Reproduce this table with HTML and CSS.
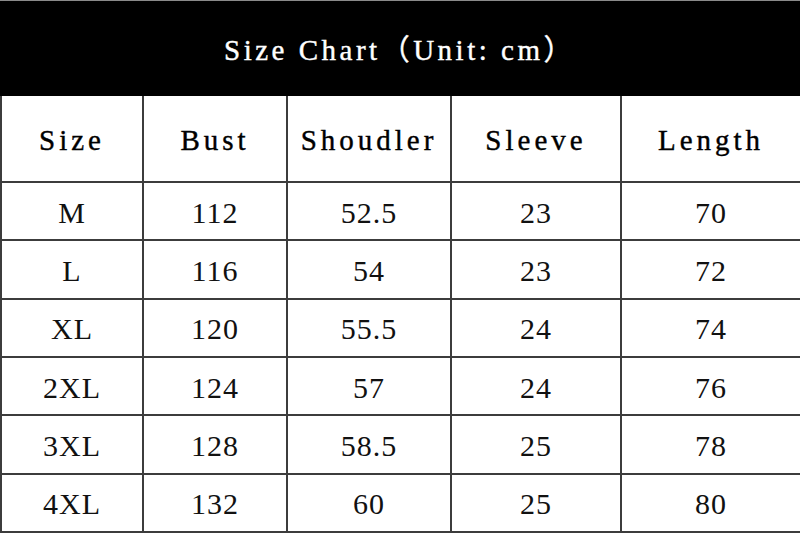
FILE: index.html
```html
<!DOCTYPE html>
<html>
<head>
<meta charset="utf-8">
<link rel="stylesheet" href="styles.css">
</head>
<body>
<div class="chart">
  <div class="title">Size Chart（Unit: cm）</div>
  <div class="grid">
    <div class="cell head first">Size</div>
    <div class="cell head">Bust</div>
    <div class="cell head">Shoudler</div>
    <div class="cell head">Sleeve</div>
    <div class="cell head last">Length</div>

    <div class="cell first">M</div><div class="cell">112</div><div class="cell">52.5</div><div class="cell">23</div><div class="cell last">70</div>
    <div class="cell first">L</div><div class="cell">116</div><div class="cell">54</div><div class="cell">23</div><div class="cell last">72</div>
    <div class="cell first">XL</div><div class="cell">120</div><div class="cell">55.5</div><div class="cell">24</div><div class="cell last">74</div>
    <div class="cell first">2XL</div><div class="cell">124</div><div class="cell">57</div><div class="cell">24</div><div class="cell last">76</div>
    <div class="cell first">3XL</div><div class="cell">128</div><div class="cell">58.5</div><div class="cell">25</div><div class="cell last">78</div>
    <div class="cell first">4XL</div><div class="cell">132</div><div class="cell">60</div><div class="cell">25</div><div class="cell last">80</div>
  </div>
</div>
</body>
</html>
```
FILE: styles.css
```css
html, body {
  margin: 0;
  padding: 0;
  background: #ffffff;
}
.chart {
  width: 800px;
  height: 533px;
  display: flex;
  flex-direction: column;
  font-family: "Liberation Serif", "Noto Sans CJK SC", serif;
  color: #111;
}
.title {
  box-sizing: border-box;
  height: 96px;
  border-top: 1px solid #8a8a8a;
  background: #000;
  color: #fff;
  font-size: 29px;
  letter-spacing: 3.5px;
  -webkit-text-stroke: 0.4px #fff;
  display: flex;
  align-items: center;
  justify-content: center;
  padding-bottom: 3px;
}
.grid {
  flex: 1;
  display: grid;
  grid-template-columns: 144px 144px 164px 170px 1fr;
  grid-template-rows: 87px repeat(6, 1fr);
}
.cell {
  box-sizing: border-box;
  border-right: 2px solid #3c3c3c;
  border-bottom: 2px solid #3c3c3c;
  display: flex;
  align-items: center;
  justify-content: center;
  font-size: 30px;
  letter-spacing: 1px;
  padding-top: 3px;
}
.cell.first {
  border-left: 2px solid #3c3c3c;
}
.cell.last {
  border-right: none;
}
.cell.head {
  font-size: 29px;
  letter-spacing: 4px;
  padding-top: 4px;
  color: #000;
  -webkit-text-stroke: 0.4px #000;
}
```
